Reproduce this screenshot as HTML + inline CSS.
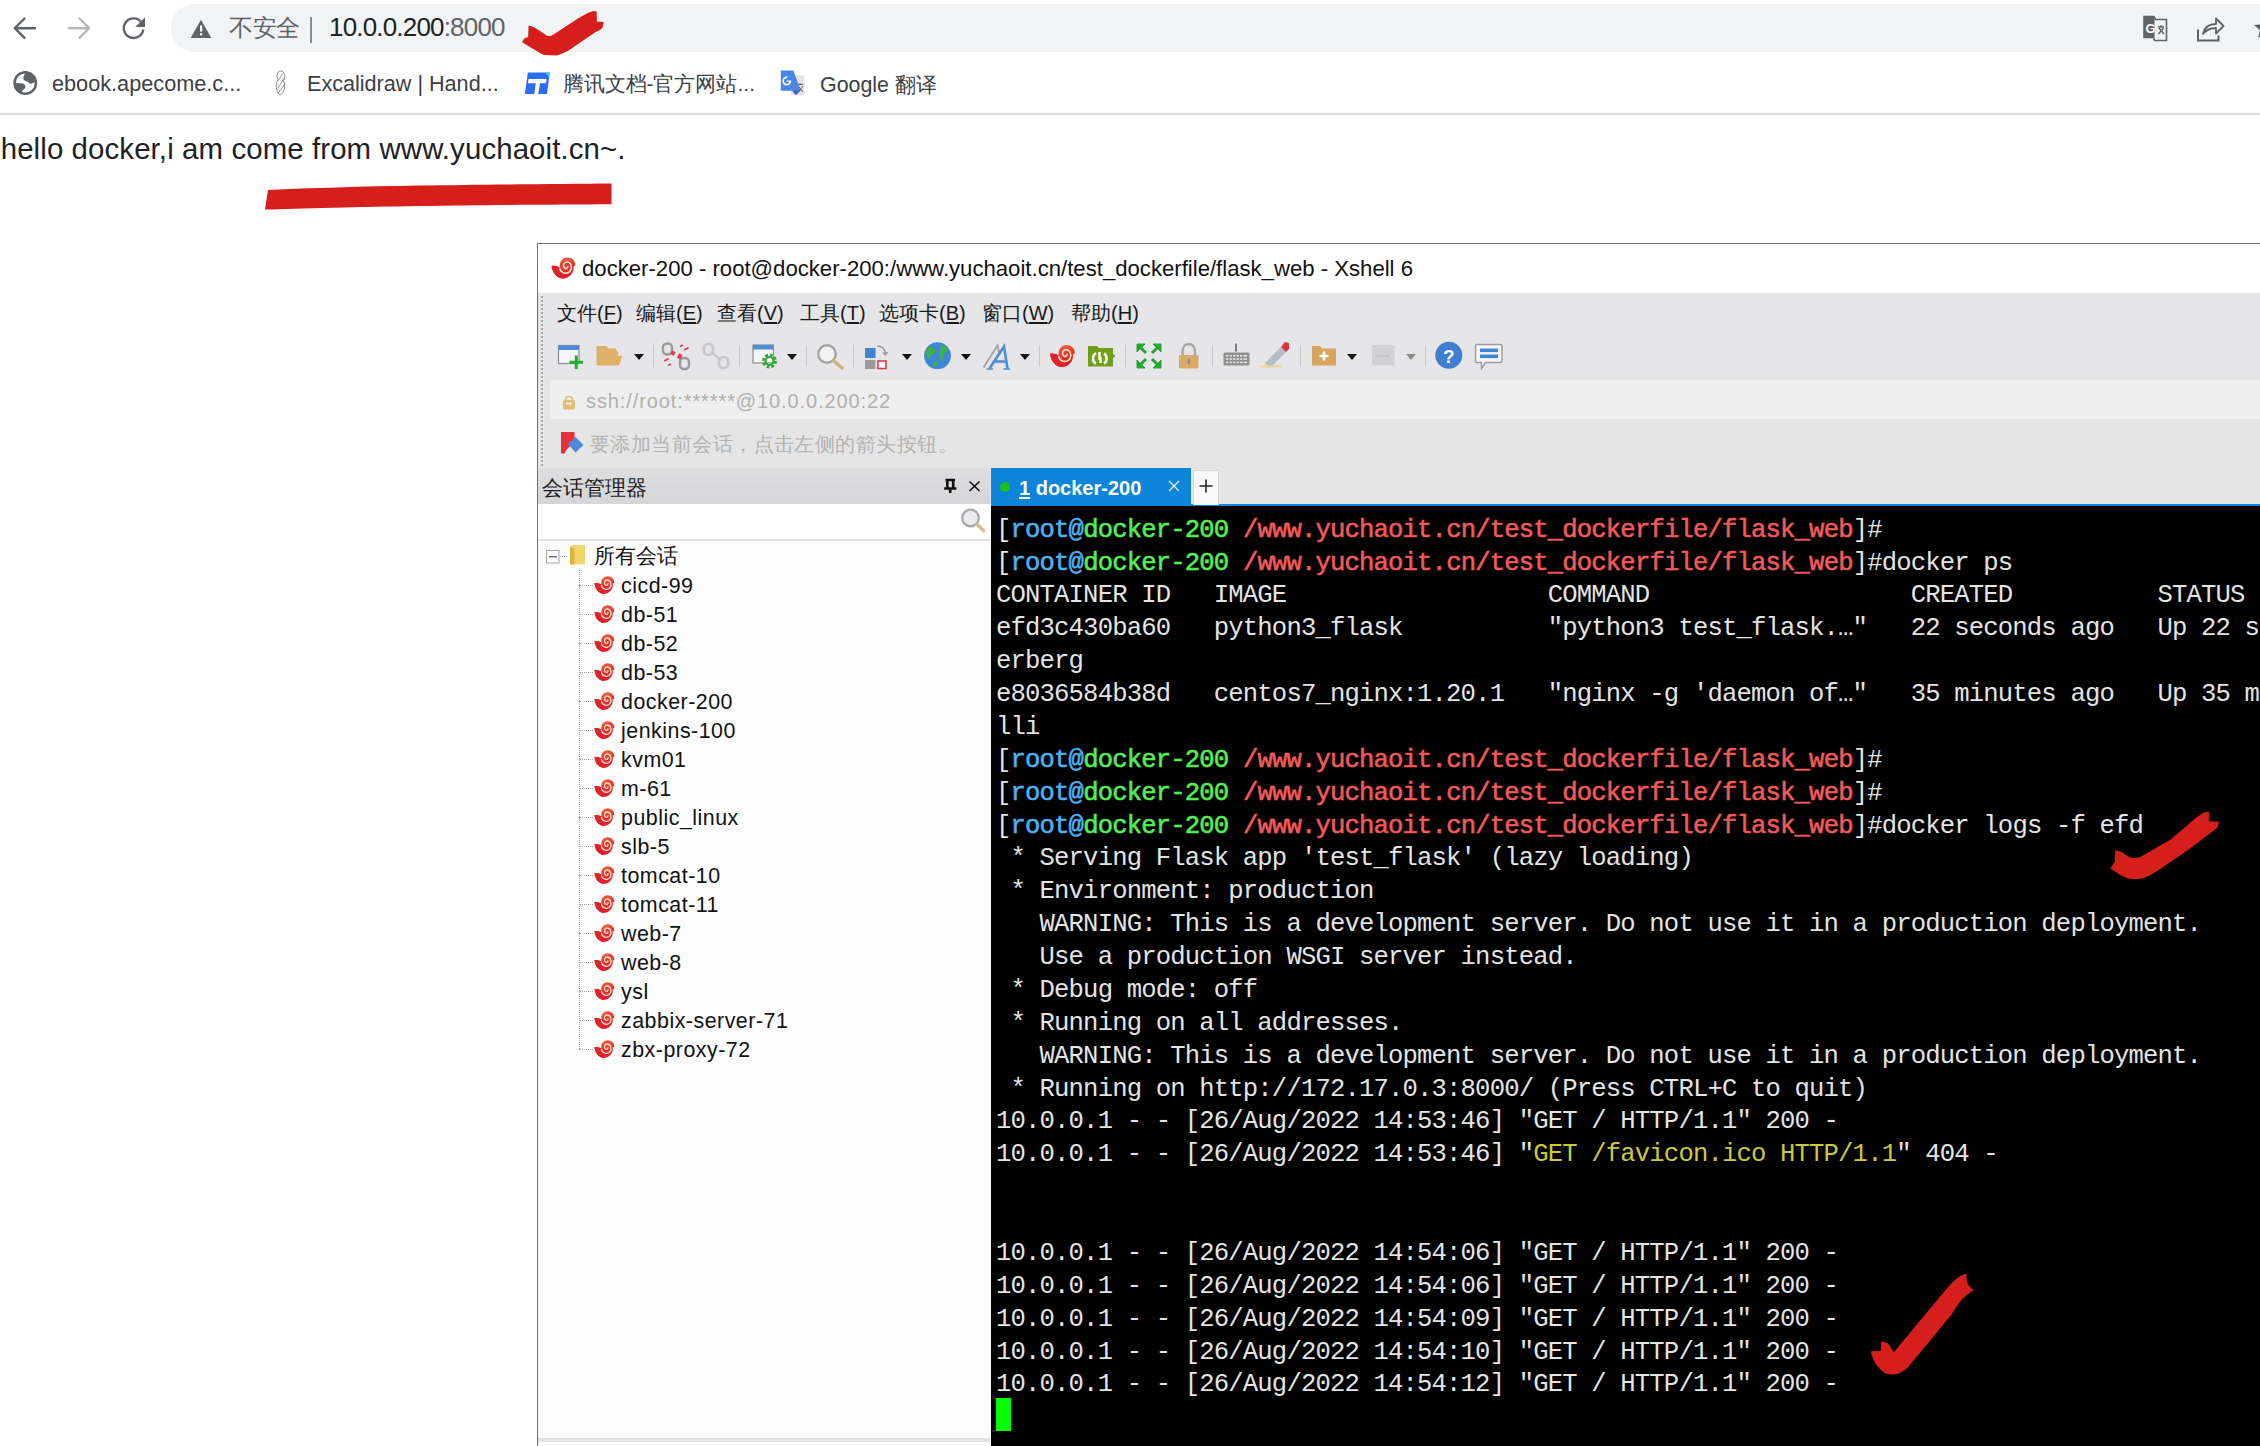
<!DOCTYPE html>
<html><head><meta charset="utf-8">
<style>
*{margin:0;padding:0;box-sizing:border-box}
html,body{width:2260px;height:1446px;overflow:hidden;background:#fff;font-family:"Liberation Sans",sans-serif;position:relative}
.a{position:absolute;white-space:nowrap}
/* browser */
#pill{left:171px;top:4px;width:2200px;height:48px;border-radius:24px;background:#f1f3f4}
#bm{color:#3c4043;font-size:21px}
#bline{left:0;top:113px;width:2260px;height:2px;background:#dadce0}
#hello{left:0.7px;top:131.5px;font-size:29.4px;letter-spacing:0.11px;color:#202124}
/* xshell */
#xw{left:537px;top:243px;width:1740px;height:1220px;border:1px solid #707070;background:#fff}
#menu{left:538px;top:293px;width:1730px;height:211px;background:linear-gradient(#e6e5e7 0,#e6e5e7 87px,#e5e5e5 87px)}
#addr{left:550px;top:380px;width:1720px;height:39px;background:#efefef}
#smh{left:538px;top:468px;width:452px;height:36px;background:linear-gradient(#dedee0,#d6d6d8)}
#sbox{left:538px;top:504px;width:452px;height:35px;background:#fff}
#sline{left:538px;top:539px;width:452px;height:2px;background:#e4e4e6}
#tree{left:538px;top:541px;width:453px;height:905px;background:#fcfcfc}
#term{left:991px;top:505px;width:1280px;height:950px;background:#000}
#tblue{left:991px;top:503.5px;width:1280px;height:2.5px;background:#0b84d9}
#tab{left:991px;top:468px;width:200px;height:37px;background:#0b84d9}
.m{position:absolute;top:300px;font-size:20px;color:#1a1a1a;white-space:nowrap}
.m u{text-decoration:underline;text-underline-offset:2px}
.sep{position:absolute;top:345px;width:1px;height:22px;background:#c9c9cb}
.dd{position:absolute;top:354px;width:0;height:0;border-left:5px solid transparent;border-right:5px solid transparent;border-top:6px solid #111}
.it{position:absolute;left:621px;font-size:21.4px;letter-spacing:0.5px;color:#111;white-space:nowrap}
.ic{position:absolute;left:593px}
.hd{position:absolute;left:579px;width:14px;height:0;border-top:1px dotted #a0a0a0}
.t{font-family:"Liberation Mono",monospace;font-size:25.6px;letter-spacing:-0.84px;color:#e4e4e4;line-height:32.875px;position:absolute;left:996px;white-space:pre}
.b{color:#4cb2f2;-webkit-text-stroke:0.55px #4cb2f2}
.g{color:#55ee55;-webkit-text-stroke:0.55px #55ee55}
.r{color:#f25a5a;-webkit-text-stroke:0.55px #f25a5a}
.y{color:#cdc938}
</style></head><body>
<div class="a" id="pill"></div>
<svg class="a" style="left:0;top:0" width="230" height="57" viewBox="0 0 230 57">
 <g fill="none" stroke="#5f6368" stroke-width="2.4" stroke-linecap="round" stroke-linejoin="round">
  <path d="M35 28.2H15.5M24.5 18.5L14.8 28.2L24.5 37.9"/>
 </g>
 <g fill="none" stroke="#b7b9bc" stroke-width="2.4" stroke-linecap="round" stroke-linejoin="round">
  <path d="M69 28.2H88.5M79.5 18.5L89.2 28.2L79.5 37.9"/>
 </g>
 <path d="M141.6 22.5A9.8 9.8 0 1 0 143.3 29.5" fill="none" stroke="#5f6368" stroke-width="2.4"/>
 <path d="M145 17.3V27H135.3Z" fill="#5f6368"/>
 <path d="M201 19.8L211.3 38H190.7Z" fill="#5f6368"/>
 <rect x="200" y="25.5" width="2.2" height="6" fill="#fff"/>
 <rect x="200" y="33.2" width="2.2" height="2.2" fill="#fff"/>
</svg>
<div class="a" style="left:229px;top:12px;font-size:24px;color:#5f6368;letter-spacing:-0.5px">不安全</div>
<div class="a" style="left:310px;top:17px;width:2px;height:26px;background:#8a8d91"></div>
<div class="a" style="left:329px;top:12px;font-size:26px;color:#202124;letter-spacing:-0.82px">10.0.0.200<span style="color:#5f6368">:8000</span></div>
<svg class="a" style="left:2136px;top:10px" width="124" height="40" viewBox="2136 10 124 40">
 <path d="M2144 16.5h10l1.5 3h11v21h-12l-1-3h-9.5z" fill="none" stroke="#5f6368" stroke-width="1.6"/>
 <path d="M2144 16.5h10.5v21h-10.5z" fill="#5f6368"/>
 <text x="2145.5" y="33" font-size="13" font-weight="bold" fill="#fff" font-family="Liberation Sans">G</text>
 <path d="M2158 27h6M2161 25v2M2158.5 34l5-6M2159 28l5 6" stroke="#5f6368" stroke-width="1.4" fill="none"/>
 <path d="M2198 29.5v11h20.5v-5" fill="none" stroke="#5f6368" stroke-width="2"/>
 <path d="M2203 34c1.5-7 7-10 13-10v-5.5l7.5 7.5-7.5 7.5v-5.5c-5.5 0-10 2-13 6z" fill="none" stroke="#5f6368" stroke-width="1.8" stroke-linejoin="round"/>
 <path d="M2265 17l-3.2 7.2-7.8.8 5.8 5.2-1.7 7.6 6.9-4z" fill="#5f6368"/>
</svg>
<div id="bm">
<svg class="a" style="left:13px;top:71px" width="25" height="25" viewBox="0 0 25 25">
 <circle cx="12.25" cy="12" r="10.7" fill="none" stroke="#5f6368" stroke-width="2.5"/>
 <path d="M13.5 1C12 2.5 10 5 10.4 8.3C12 10.2 14.5 10.8 15.5 11.2C16.5 12.5 17.5 12.8 18.2 12.7C19.5 12.5 21 11.5 22.5 10.8A11 11 0 0 0 13.5 1Z" fill="#5f6368"/>
 <path d="M1.4 12L8.8 12.2C11 12.6 12.5 14 12.4 16C12.2 17.5 11.5 18.5 9.4 18.9L8.8 22.4A11 11 0 0 1 1.4 12Z" fill="#5f6368"/>
</svg>
<div class="a" style="left:52px;top:71px;font-size:21.7px;color:#3c4043">ebook.apecome.c...</div>
<svg class="a" style="left:270px;top:68px" width="20" height="30" viewBox="270 68 20 30">
 <path d="M280.5 71C277 71.5 276 76 278 79.5C275.5 84 275.5 91.5 280 95C284.5 93 286 86 283.5 81C286 77 284.5 71 280.5 71Z" fill="none" stroke="#8c8c8c" stroke-width="1"/>
 <path d="M277.5 89L284 78M278.5 93L285 83.5M278.5 80.5L282.5 73.5" stroke="#8c8c8c" stroke-width="0.9"/>
</svg>
<div class="a" style="left:307px;top:71px;font-size:21.6px;color:#3c4043">Excalidraw | Hand...</div>
<svg class="a" style="left:522px;top:70px" width="30" height="26" viewBox="522 70 30 26">
 <path d="M527.8 72.6H549.7L547 93.9H524.9Z" fill="#2b6cf5"/>
 <path d="M545 72.6H549.7L549.2 77Z" fill="#2ad0ff"/>
 <path d="M528.5 79H546.5L546 83.2H540L538.2 94H534.3L535.8 83.2H528Z" fill="#fff"/>
</svg>
<div class="a" style="left:562.5px;top:70px;font-size:21px;color:#3c4043">腾讯文档-官方网站...</div>
<svg class="a" style="left:776px;top:66px" width="32" height="32" viewBox="776 66 32 32">
 <rect x="791" y="75.5" width="13.5" height="19.7" fill="#e4e4e4"/>
 <path d="M780.8 70.4H793.5L800.5 90.8H780.8Z" fill="#4a86e8"/>
 <path d="M792 90.5L795.8 95.2L800.6 90.5Z" fill="#3a5fcd"/>
 <circle cx="786.8" cy="81" r="3.6" fill="none" stroke="#fff" stroke-width="1.7"/>
 <path d="M786.8 81H790.6" stroke="#fff" stroke-width="1.6"/>
 <rect x="787" y="77" width="5" height="3.5" fill="#4a86e8"/>
 <path d="M798 84.5h5M800 83v1.5M798.5 92l4.5-6M798.8 86.5l4 5.5" stroke="#666" stroke-width="1" fill="none"/>
</svg>
<div class="a" style="left:820px;top:70px;font-size:21.4px;color:#3c4043">Google 翻译</div>
</div>
<svg class="a" style="left:515px;top:5px" width="100" height="60" viewBox="515 5 100 60">
 <path d="M522.2 42.3L524.1 38.4L528.2 37L528.5 25.8C530 25.8 531.5 26.2 533.4 27C536 28.3 538 29.8 540.2 31.1C543.5 33.5 546 36 548.9 36C550.3 36 551.5 35.6 552.8 35L577.2 19C582 16 588 12.5 592.7 11.2L596.6 11.2L596.9 21.4L603.7 22.1C603.5 25 602.8 27.5 601.5 28.7C599.5 30.5 597.5 31.2 595.6 32.1L570.8 49.1C566 52 561 55 556.2 55.5L544.1 55C542 54.5 540.5 53.5 539.2 52.6L527 45.3Z" fill="#d61f1a"/>
</svg>
<div class="a" id="bline"></div>
<div class="a" id="hello">hello docker,i am come from www.yuchaoit.cn~.</div>
<svg class="a" style="left:260px;top:178px" width="360" height="36" viewBox="260 178 360 36"><path d="M268 190C310 188 360 186.5 420 185.5C480 184.5 560 184 611.5 183.5V204.2C560 204.5 480 205 420 206C360 207 300 208.5 265 209.6Z" fill="#d61f1a"/></svg>

<div class="a" id="xw"></div>
<svg width="0" height="0" style="position:absolute">
 <defs>
  <linearGradient id="sg" x1="0" y1="0" x2="0.3" y2="1"><stop offset="0" stop-color="#f0704a"/><stop offset="0.5" stop-color="#ea3a28"/><stop offset="1" stop-color="#e01e24"/></linearGradient>
  <symbol id="snail" viewBox="0 0 22 20">
   <path d="M1.5 8.2C4 7.8 6.5 8.2 8.5 10 7.5 5 10.5 1.2 14.5 1.2 18.5 1.2 21.5 4 21.3 7.8L19.8 8.5C20.5 13.5 16.5 18.8 11 18.8 6 18.8 2 14 1.5 8.2Z" fill="url(#sg)"/>
   <path d="M1.5 8.2C4 7.8 6.5 8.2 8.5 10 9.5 14 13 15.5 16.5 14 14.5 17.5 12.5 18.8 11 18.8 6 18.8 2 14 1.5 8.2Z" fill="#e2222a"/>
   <path d="M8.3 10.2C9 14 13 15.2 16 13.5 19 11.5 18.5 5.5 14.5 5 11.5 4.8 10.5 8.5 12.5 10 14 11 15.5 9.5 14.8 8.2" fill="none" stroke="#fbe2d4" stroke-width="1.3"/>
  </symbol>
 </defs>
</svg>
<svg class="a" style="left:548.5px;top:256px" width="28" height="24"><use href="#snail" width="28" height="24"/></svg>
<div class="a" style="left:582px;top:255.5px;font-size:22.15px;color:#111">docker-200 - root@docker-200:/www.yuchaoit.cn/test_dockerfile/flask_web - Xshell 6</div>
<div class="a" id="menu"></div>
<div class="a" style="left:541px;top:296px;width:0;height:170px;border-left:2px dotted #a8a8aa"></div>
<div class="m" style="left:557px">文件(<u>F</u>)</div>
<div class="m" style="left:636px">编辑(<u>E</u>)</div>
<div class="m" style="left:717px">查看(<u>V</u>)</div>
<div class="m" style="left:800px">工具(<u>T</u>)</div>
<div class="m" style="left:879px">选项卡(<u>B</u>)</div>
<div class="m" style="left:982px">窗口(<u>W</u>)</div>
<div class="m" style="left:1071px">帮助(<u>H</u>)</div>
<!-- toolbar -->
<svg class="a" style="left:550px;top:335px" width="970" height="45" viewBox="550 335 970 45">
 <!-- new session -->
 <rect x="558.5" y="345.5" width="20.5" height="18" fill="#f4f6fa" stroke="#8e8e8e" stroke-width="1.2"/>
 <rect x="558.5" y="345.5" width="20.5" height="4.5" fill="#4b8fd8"/>
 <path d="M576.3 355.5v13.5M569.5 362.3h13.5" stroke="#1fae2a" stroke-width="3"/>
 <!-- open folder -->
 <path d="M596.5 346h10l2 2.5h7l3 4.5-1 2.5 5 .5-3.5 9.5h-22.5z" fill="#deb068"/>
 <!-- disconnect -->
 <g fill="none" stroke="#9a9a9a" stroke-width="2.4"><rect x="663" y="343.5" width="9" height="11" rx="4"/><rect x="680" y="358" width="9" height="11" rx="4"/></g>
 <g fill="#e8395a"><rect x="671" y="351" width="4" height="4" transform="rotate(30 673 353)"/><rect x="678" y="354" width="4" height="5" transform="rotate(30 680 356)"/><rect x="664" y="359" width="5" height="2" transform="rotate(-30 666 360)"/><rect x="684" y="348" width="5" height="2" transform="rotate(-30 686 349)"/><rect x="668" y="364" width="3" height="2" transform="rotate(-30 669 365)"/><rect x="680" y="345" width="3" height="2" transform="rotate(-30 681 346)"/></g>
 <!-- gray chain -->
 <g fill="none" stroke="#c8c8ca" stroke-width="2.6"><rect x="704" y="344" width="9" height="11" rx="4"/><rect x="719" y="357" width="9" height="11" rx="4"/><path d="M711 352l10 8"/></g>
 <!-- window gear -->
 <rect x="753" y="345" width="20.5" height="18" fill="#f4f6fa" stroke="#8e8e8e" stroke-width="1.2"/>
 <rect x="753" y="345" width="20.5" height="4.5" fill="#4b8fd8"/>
 <circle cx="769.5" cy="361" r="5.8" fill="none" stroke="#2faa35" stroke-width="3.4" stroke-dasharray="2.6 1.9"/>
 <circle cx="769.5" cy="361" r="4" fill="none" stroke="#2faa35" stroke-width="2.2"/>
 <!-- magnifier -->
 <circle cx="827" cy="354" r="8.8" fill="#f2f2f2" stroke="#a5a5a5" stroke-width="2.4"/>
 <path d="M833.5 360.5l8.5 7.5" stroke="#d9ae78" stroke-width="3.2" stroke-linecap="round"/>
 <!-- layout -->
 <rect x="865" y="348" width="10.5" height="10" fill="#3d86d6"/>
 <rect x="865" y="360" width="10.5" height="9" fill="#9b9b9b"/>
 <rect x="878" y="361" width="8" height="7.5" fill="#fff" stroke="#e23a4a" stroke-width="1.6"/>
 <path d="M877 346c5 0 8 3 8.5 8" fill="none" stroke="#9c9c9c" stroke-width="1.6"/><path d="M882 352.5l3.5 3.5 3-4z" fill="#9c9c9c"/>
 <!-- globe -->
 <circle cx="937.5" cy="355.7" r="13.4" fill="#3d87d6"/>
 <path d="M929 347c3-1 5 1 6 3s-1 4-3 5-2 4-4 3c-1.5-2-2.5-5-2-8z M941 345c3 0 6 2 7 5-1 2-3 2-4 4s1 4-1 6c-2 1-3-1-3-3s-2-3-1-5 2-4 2-7z M935 361c2 0 3 2 2 4s-3 2-4 1 0-4 2-5z" fill="#3db04a"/>
 <!-- font AA -->
 <path d="M983.5 367.5L997.5 345.5L999.5 354" fill="none" stroke="#a6a6a6" stroke-width="2"/>
 <path d="M989.5 368.5L1004 346.5L1007.5 368.5M993.5 361.5H1006.5" fill="none" stroke="#4a8fd8" stroke-width="2.6"/>
 <path d="M986.5 369H993M1003.5 369H1010" stroke="#4a8fd8" stroke-width="1.6"/>
 <!-- xshell -->
 <use href="#snail" x="1048" y="343.5" width="28" height="25"/>
 <!-- xftp folder -->
 <path d="M1088 346h9l2 2h14v6l2 1.5v1l-2 1.5v8.5h-25z" fill="#6f9e19"/>
 <path d="M1096 363.5c-4-2-4-8 0-10.5M1099.5 352v8M1104 353.5c3.5 2 3.5 8 0 10M1100.5 363v-6" fill="none" stroke="#f4f8ec" stroke-width="2.6"/>
 <!-- fullscreen -->
 <g stroke="#27a636" stroke-width="3" fill="#27a636">
  <path d="M1139 346l7 7M1159 346l-7 7M1139 366l7-7M1159 366l-7-7" fill="none"/>
  <path d="M1137 344h8l-8 8z M1161 344h-8l8 8z M1137 368h8l-8-8z M1161 368h-8l8-8z" stroke-width="1"/>
 </g>
 <!-- lock -->
 <path d="M1182.5 356v-4c0-5.5 3-8 6.3-8s6.3 2.5 6.3 8v4" fill="none" stroke="#a6a6a6" stroke-width="2.4"/>
 <rect x="1179" y="355" width="19.5" height="13.5" rx="1" fill="#d9aa66"/>
 <rect x="1187.8" y="359" width="2" height="5" fill="#8e86a8"/>
 <!-- keyboard -->
 <path d="M1236 343.5v8" stroke="#7c7c7c" stroke-width="2"/>
 <rect x="1223.5" y="352.5" width="26" height="13" rx="1.5" fill="#909090"/>
 <g fill="#e6e6e6"><rect x="1226" y="355" width="21" height="1.6"/><rect x="1226" y="358.3" width="21" height="1.6"/><rect x="1226" y="361.6" width="21" height="1.6"/></g>
 <g stroke="#909090" stroke-width="1.3"><path d="M1229 354v10M1232.5 354v10M1236 354v10M1239.5 354v10M1243 354v10"/></g>
 <!-- pen -->
 <path d="M1265 363l16-16 5 5-16 16z" fill="#b8bcc8"/>
 <path d="M1281 347l4-5 4 1v6l-3 3z" fill="#e0303c"/>
 <path d="M1260 366.5h22" stroke="#ead79a" stroke-width="2"/>
 <path d="M1263 366l2-3 5 5z" fill="#ead79a"/>
 <!-- folder plus -->
 <path d="M1312 346h8l2 2.5h14v17h-24z" fill="#d8a55e"/>
 <path d="M1324 351.5v9M1319.5 356h9" stroke="#fff" stroke-width="2.6"/>
 <!-- gray box -->
 <rect x="1372" y="345" width="22.5" height="20.5" fill="#d2d2d4"/>
 <rect x="1376" y="355" width="14" height="2" fill="#c4c4c6"/>
 <!-- help -->
 <circle cx="1448.8" cy="355.2" r="13.5" fill="#3e7fd0"/>
 <text x="1443" y="362.5" font-size="19" font-weight="bold" fill="#fff" font-family="Liberation Sans">?</text>
 <!-- chat -->
 <path d="M1477 344.5h23.5c1 0 1.5.5 1.5 1.5v15c0 1-.5 1.5-1.5 1.5h-15l-4 6v-6h-4.5c-1 0-1.5-.5-1.5-1.5v-15c0-1 .5-1.5 1.5-1.5z" fill="#f6f6f8" stroke="#9a9a9a" stroke-width="1.4"/>
 <rect x="1480" y="348.5" width="18" height="3.6" fill="#3d86d6"/>
 <rect x="1480" y="354.5" width="18" height="3.6" fill="#3d86d6"/>
</svg>
<div class="dd" style="left:633.5px"></div>
<div class="dd" style="left:787px"></div>
<div class="dd" style="left:902px"></div>
<div class="dd" style="left:960.5px"></div>
<div class="dd" style="left:1020px"></div>
<div class="dd" style="left:1347px"></div>
<div class="dd" style="left:1406px;border-top-color:#8a8a8a"></div>
<div class="sep" style="left:652.5px"></div>
<div class="sep" style="left:739px"></div>
<div class="sep" style="left:806px"></div>
<div class="sep" style="left:853px"></div>
<div class="sep" style="left:1038.5px"></div>
<div class="sep" style="left:1125px"></div>
<div class="sep" style="left:1211.5px"></div>
<div class="sep" style="left:1299.5px"></div>
<div class="sep" style="left:1425px"></div>
<!-- address -->
<div class="a" id="addr"></div>
<svg class="a" style="left:561px;top:395px" width="16" height="16" viewBox="0 0 16 16"><rect x="2" y="5" width="12" height="9.5" rx="2" fill="#e6bb72"/><path d="M4.5 6V4.5C4.5 2.5 6 1.5 8 1.5s3.5 1 3.5 3V6" fill="none" stroke="#e6bb72" stroke-width="1.6"/><rect x="5" y="7.5" width="6" height="2" fill="#fff3d8"/></svg>
<div class="a" style="left:586px;top:389.5px;font-size:20px;color:#b0b0b0;letter-spacing:0.9px">ssh://root:******@10.0.0.200:22</div>
<!-- hint -->
<svg class="a" style="left:559px;top:430px" width="26" height="26" viewBox="0 0 26 26"><path d="M2 2h13.5v10L8 19 5.5 23.5H2z" fill="#e4303a"/><path d="M9 14l7.5-7 8 8-8 7.5z" fill="#4a8ad8"/></svg>
<div class="a" style="left:590px;top:430.5px;font-size:19.7px;color:#b3b3b3;letter-spacing:0.45px">要添加当前会话，点击左侧的箭头按钮。</div>
<!-- session manager -->
<div class="a" id="smh"></div>
<div class="a" style="left:542px;top:474px;font-size:20.6px;color:#1a1a1a">会话管理器</div>
<svg class="a" style="left:940px;top:476px" width="45" height="20" viewBox="940 476 45 20">
 <path d="M945.5 480h9.5M947.3 480v8.5M953.2 480v8.5M944.2 488.5h12.2M950.2 488.5v4.5" stroke="#111" stroke-width="2.6" fill="none"/>
 <path d="M969.5 481.5l10 9.5M979.5 481.5l-10 9.5" stroke="#111" stroke-width="1.6"/>
</svg>
<div class="a" id="sbox"></div>
<svg class="a" style="left:958px;top:507px" width="30" height="30" viewBox="958 507 30 30">
 <circle cx="970.5" cy="518" r="8.3" fill="#ececf0" stroke="#a8a8a8" stroke-width="2.2"/>
 <path d="M977 524.5l6.5 6" stroke="#cfc08a" stroke-width="3.6" stroke-linecap="round"/>
</svg>
<div class="a" id="sline"></div>
<div class="a" id="tree"></div>
<svg class="a" style="left:544px;top:543px" width="50" height="26" viewBox="544 543 50 26">
 <rect x="546.5" y="550.5" width="12.5" height="12.5" fill="#fff" stroke="#a5a5a5" stroke-width="1"/>
 <path d="M549 556.8h8" stroke="#5a5a8a" stroke-width="1.3"/>
 <path d="M560 556.5h8" stroke="#a0a0a0" stroke-width="1" stroke-dasharray="1 1"/>
 <path d="M570 546.5l3.5-1.5h11.5v19.5h-15z" fill="#f3d46c"/>
 <path d="M570 546.5l4.5 2v16h-4.5z" fill="#e0b43c"/>
</svg>
<div class="a" style="left:594px;top:541.5px;font-size:20.5px;color:#111">所有会话</div>
<div class="a" style="left:578.5px;top:569px;width:0;height:480px;border-left:1px dotted #a0a0a0"></div>
<div class="hd" style="top:584.5px"></div><svg class="ic" style="top:574.5px" width="22" height="20"><use href="#snail" width="22" height="20"/></svg><div class="it" style="margin-top:2.5px;top:571.0px">cicd-99</div>
<div class="hd" style="top:613.5px"></div><svg class="ic" style="top:603.5px" width="22" height="20"><use href="#snail" width="22" height="20"/></svg><div class="it" style="margin-top:2.5px;top:600.0px">db-51</div>
<div class="hd" style="top:642.5px"></div><svg class="ic" style="top:632.5px" width="22" height="20"><use href="#snail" width="22" height="20"/></svg><div class="it" style="margin-top:2.5px;top:629.0px">db-52</div>
<div class="hd" style="top:671.5px"></div><svg class="ic" style="top:661.5px" width="22" height="20"><use href="#snail" width="22" height="20"/></svg><div class="it" style="margin-top:2.5px;top:658.0px">db-53</div>
<div class="hd" style="top:700.5px"></div><svg class="ic" style="top:690.5px" width="22" height="20"><use href="#snail" width="22" height="20"/></svg><div class="it" style="margin-top:2.5px;top:687.0px">docker-200</div>
<div class="hd" style="top:729.5px"></div><svg class="ic" style="top:719.5px" width="22" height="20"><use href="#snail" width="22" height="20"/></svg><div class="it" style="margin-top:2.5px;top:716.0px">jenkins-100</div>
<div class="hd" style="top:758.5px"></div><svg class="ic" style="top:748.5px" width="22" height="20"><use href="#snail" width="22" height="20"/></svg><div class="it" style="margin-top:2.5px;top:745.0px">kvm01</div>
<div class="hd" style="top:787.5px"></div><svg class="ic" style="top:777.5px" width="22" height="20"><use href="#snail" width="22" height="20"/></svg><div class="it" style="margin-top:2.5px;top:774.0px">m-61</div>
<div class="hd" style="top:816.5px"></div><svg class="ic" style="top:806.5px" width="22" height="20"><use href="#snail" width="22" height="20"/></svg><div class="it" style="margin-top:2.5px;top:803.0px">public_linux</div>
<div class="hd" style="top:845.5px"></div><svg class="ic" style="top:835.5px" width="22" height="20"><use href="#snail" width="22" height="20"/></svg><div class="it" style="margin-top:2.5px;top:832.0px">slb-5</div>
<div class="hd" style="top:874.5px"></div><svg class="ic" style="top:864.5px" width="22" height="20"><use href="#snail" width="22" height="20"/></svg><div class="it" style="margin-top:2.5px;top:861.0px">tomcat-10</div>
<div class="hd" style="top:903.5px"></div><svg class="ic" style="top:893.5px" width="22" height="20"><use href="#snail" width="22" height="20"/></svg><div class="it" style="margin-top:2.5px;top:890.0px">tomcat-11</div>
<div class="hd" style="top:932.5px"></div><svg class="ic" style="top:922.5px" width="22" height="20"><use href="#snail" width="22" height="20"/></svg><div class="it" style="margin-top:2.5px;top:919.0px">web-7</div>
<div class="hd" style="top:961.5px"></div><svg class="ic" style="top:951.5px" width="22" height="20"><use href="#snail" width="22" height="20"/></svg><div class="it" style="margin-top:2.5px;top:948.0px">web-8</div>
<div class="hd" style="top:990.5px"></div><svg class="ic" style="top:980.5px" width="22" height="20"><use href="#snail" width="22" height="20"/></svg><div class="it" style="margin-top:2.5px;top:977.0px">ysl</div>
<div class="hd" style="top:1019.5px"></div><svg class="ic" style="top:1009.5px" width="22" height="20"><use href="#snail" width="22" height="20"/></svg><div class="it" style="margin-top:2.5px;top:1006.0px">zabbix-server-71</div>
<div class="hd" style="top:1048.5px"></div><svg class="ic" style="top:1038.5px" width="22" height="20"><use href="#snail" width="22" height="20"/></svg><div class="it" style="margin-top:2.5px;top:1035.0px">zbx-proxy-72</div>
<div class="a" style="left:538px;top:1438px;width:452px;height:4px;background:#e2e2e4"></div>
<!-- tab bar -->
<div class="a" id="term"></div>
<div class="a" id="tblue"></div>
<div class="a" id="tab"></div>
<div class="a" style="left:1000px;top:482px;width:10px;height:10px;border-radius:50%;background:#19c319"></div>
<div class="a" style="left:1019px;top:476.5px;font-size:20px;font-weight:bold;color:#fff"><u style="text-decoration-thickness:1.5px;text-underline-offset:1.5px">1</u> docker-200</div>
<svg class="a" style="left:1166px;top:478px" width="16" height="16" viewBox="0 0 16 16"><path d="M3 3l10 10M13 3L3 13" stroke="#e8f2fb" stroke-width="1.3"/></svg>
<div class="a" style="left:1192.5px;top:469.5px;width:26px;height:35px;background:#f9f9f9;border:1px solid #d8d8d8;border-bottom:none"></div>
<svg class="a" style="left:1198px;top:478px" width="16" height="16" viewBox="0 0 16 16"><path d="M8 1.5v13M1.5 8h13" stroke="#222" stroke-width="1.6"/></svg>
<div class="t" style="top:514.7px">[<span class="b">root@</span><span class="g">docker-200</span> <span class="r">/www.yuchaoit.cn/test_dockerfile/flask_web</span>]#
[<span class="b">root@</span><span class="g">docker-200</span> <span class="r">/www.yuchaoit.cn/test_dockerfile/flask_web</span>]#docker ps
CONTAINER ID   IMAGE                  COMMAND                  CREATED          STATUS
efd3c430ba60   python3_flask          "python3 test_flask.…"   22 seconds ago   Up 22 seconds
erberg
e8036584b38d   centos7_nginx:1.20.1   "nginx -g 'daemon of…"   35 minutes ago   Up 35 minutes
lli
[<span class="b">root@</span><span class="g">docker-200</span> <span class="r">/www.yuchaoit.cn/test_dockerfile/flask_web</span>]#
[<span class="b">root@</span><span class="g">docker-200</span> <span class="r">/www.yuchaoit.cn/test_dockerfile/flask_web</span>]#
[<span class="b">root@</span><span class="g">docker-200</span> <span class="r">/www.yuchaoit.cn/test_dockerfile/flask_web</span>]#docker logs -f efd
 * Serving Flask app 'test_flask' (lazy loading)
 * Environment: production
   WARNING: This is a development server. Do not use it in a production deployment.
   Use a production WSGI server instead.
 * Debug mode: off
 * Running on all addresses.
   WARNING: This is a development server. Do not use it in a production deployment.
 * Running on http://172.17.0.3:8000/ (Press CTRL+C to quit)
10.0.0.1 - - [26/Aug/2022 14:53:46] "GET / HTTP/1.1" 200 -
10.0.0.1 - - [26/Aug/2022 14:53:46] "<span class="y">GET /favicon.ico HTTP/1.1</span>" 404 -


10.0.0.1 - - [26/Aug/2022 14:54:06] "GET / HTTP/1.1" 200 -
10.0.0.1 - - [26/Aug/2022 14:54:06] "GET / HTTP/1.1" 200 -
10.0.0.1 - - [26/Aug/2022 14:54:09] "GET / HTTP/1.1" 200 -
10.0.0.1 - - [26/Aug/2022 14:54:10] "GET / HTTP/1.1" 200 -
10.0.0.1 - - [26/Aug/2022 14:54:12] "GET / HTTP/1.1" 200 -
</div>
<div class="a" style="left:996px;top:1398px;width:15px;height:33px;background:#00ff00"></div>
<svg class="a" style="left:2100px;top:800px" width="130" height="90" viewBox="2100 800 130 90">
 <path d="M2110.3 868.4L2114.9 861.6L2115.2 850.4C2117 850.5 2119 851 2120.5 851.6C2124.5 853.5 2128 857.5 2132.4 857.9C2135 858 2137.5 857.8 2139.8 857.2L2170.3 839.8L2187.1 825.5C2192 821.5 2197 816 2202 813.7C2204 812.5 2206.5 811.8 2208.9 811.8L2208.9 821.2L2218.9 821.8C2218.8 824 2218 826.5 2217 828L2188.4 849.8L2162.2 867.8C2157 871 2152 874.5 2147.3 876.5C2144 878 2140.5 879 2137.3 879C2134 879 2131 878.8 2128 878.4C2125 877.5 2121.5 875.5 2118.7 874Z" fill="#d61f1a"/>
</svg>
<svg class="a" style="left:1860px;top:1265px" width="125" height="120" viewBox="1860 1265 125 120">
 <path d="M1870.8 1351.3L1880.7 1350.9L1881.2 1341.8C1883.5 1341.8 1885.8 1342.2 1887.4 1343C1889.2 1344.5 1890.3 1346.2 1891.1 1348L1893.6 1352.6L1918.1 1323.1L1947.1 1288.2C1951 1283.5 1955.5 1279.2 1959.6 1276.6C1962 1275 1964.3 1273.9 1966.6 1273.7C1966.3 1276.5 1966.5 1279.5 1967.1 1282.4C1968.5 1285.5 1971 1288 1973.7 1289.9C1970 1292.5 1966 1295.5 1962.9 1298.2C1958.5 1303 1955 1309.5 1951.3 1314.8L1924.7 1347.2L1907.3 1367.9C1903.5 1371 1899.5 1373.8 1894.9 1374.5C1891.5 1374.8 1888 1374.2 1884.9 1372.9C1880.5 1370.5 1877 1366 1874.1 1361.3C1872.5 1358 1871.3 1354.5 1870.8 1351.3Z" fill="#d61f1a"/>
</svg>
</body></html>
